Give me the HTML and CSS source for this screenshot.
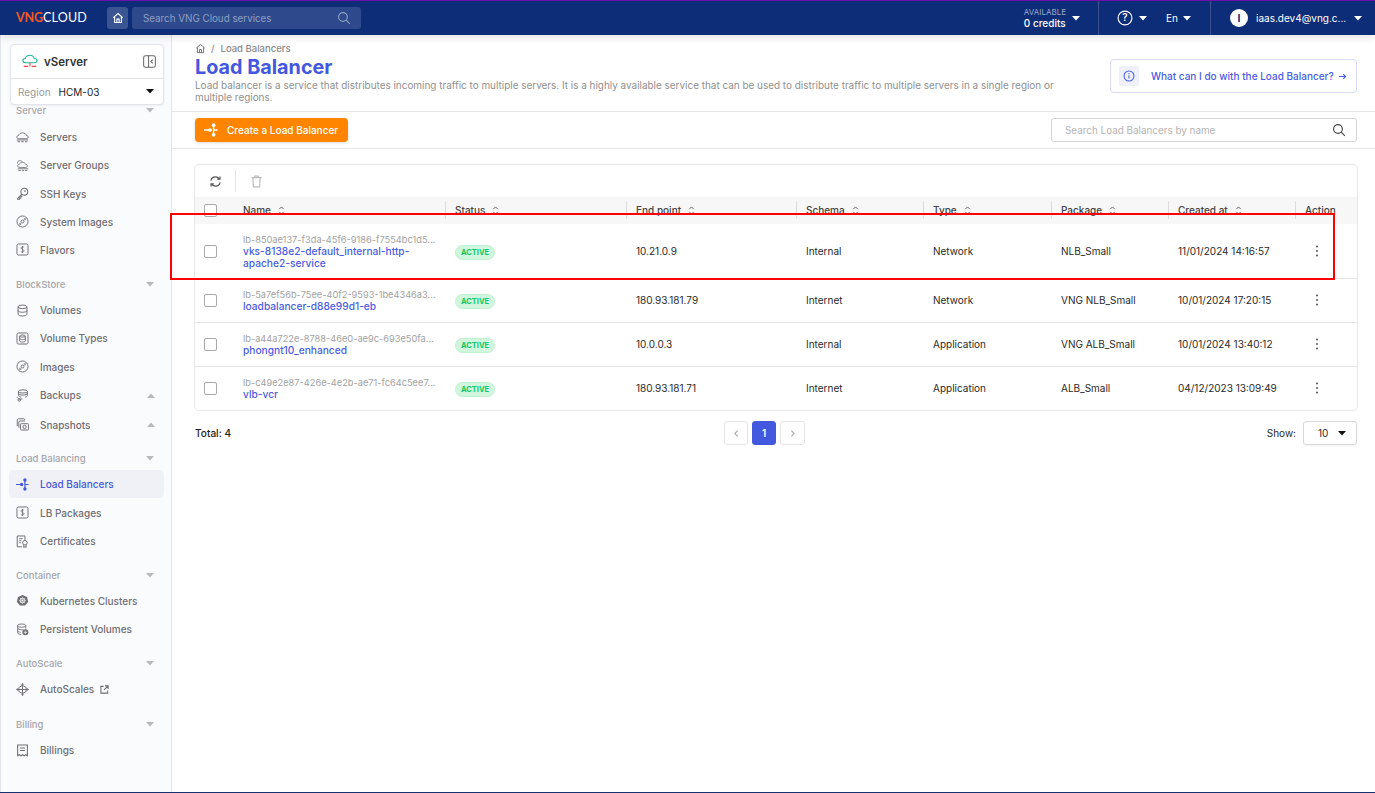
FILE: index.html
```html
<!DOCTYPE html>
<html lang="en">
<head>
<meta charset="utf-8">
<title>Load Balancer</title>
<link rel="stylesheet" href="styles.css">
</head>
<body>
<svg class="defs" width="0" height="0">
  <defs>
    <symbol id="i-lb" viewBox="0 0 16 16"><path d="M0 8h7M11 3v10M11 8h4.500" fill="none" stroke="currentColor" stroke-width="1.500"/><circle cx="7" cy="8" r="2.100" fill="currentColor"/><circle cx="11" cy="2.500" r="2.100" fill="currentColor"/><circle cx="11" cy="13.500" r="2.100" fill="currentColor"/></symbol>
    <symbol id="i-sort" viewBox="0 0 10 12"><path d="M2.500 4.500 5 2l2.500 2.500M2.500 7.500 5 10l2.500-2.500" fill="none" stroke="currentColor" stroke-width="1"/></symbol>
    <symbol id="i-disc" viewBox="0 0 16 16"><g fill="none" stroke="currentColor" stroke-width="1.200"><circle cx="8" cy="8" r="6.800"/><circle cx="8" cy="8" r="1.800"/><path d="M5 9.500 4.500 11.500 6.500 11M11 6.500 11.500 4.500 9.500 5"/></g></symbol>
    <symbol id="i-dollar" viewBox="0 0 16 16"><rect x="1.200" y="1.200" width="13.600" height="13.600" rx="1.800" fill="none" stroke="currentColor" stroke-width="1.200"/><path d="M10 5.500C9.500 4.600 6 4.400 6 6.200S10 7.800 10 9.700 6.500 11.400 6 10.500M8 3.800v8.400" fill="none" stroke="currentColor" stroke-width="1"/></symbol>
    <symbol id="i-caret" viewBox="0 0 10 6"><path d="M0 0h10L5 5.500z" fill="currentColor"/></symbol>
    <symbol id="i-kebab" viewBox="0 0 4 14"><circle cx="2" cy="2.500" r="1" fill="currentColor"/><circle cx="2" cy="7" r="1" fill="currentColor"/><circle cx="2" cy="11.500" r="1" fill="currentColor"/></symbol>
    <symbol id="i-search" viewBox="0 0 16 16"><circle cx="6.800" cy="6.800" r="5" fill="none" stroke="currentColor" stroke-width="1.300"/><path d="m10.500 10.500 4.200 4.200" stroke="currentColor" stroke-width="1.300"/></symbol>
  </defs>
</svg>

<div class="app">
  <header class="topbar">
    <div class="logo"><span class="logo-vng">VNG</span><span class="logo-cloud">CLOUD</span></div>
    <a class="home-btn"><svg class="ico-home" viewBox="0 0 16 16"><path d="M1.800 7.500 8 2l6.200 5.500M3.500 6.500V14h9V6.500M6.500 14V9.500h3V14" fill="none" stroke="currentColor" stroke-width="1.400"/></svg></a>
    <div class="top-search"><span>Search VNG Cloud services</span><svg class="ico-14"><use href="#i-search"/></svg></div>
    <div class="top-right">
      <div class="credits">
        <div class="credits-text"><small>AVAILABLE</small><b>0 credits</b></div>
        <svg class="caret-w"><use href="#i-caret"/></svg>
      </div>
      <div class="help">
        <svg class="ico-help" viewBox="0 0 18 18"><circle cx="9" cy="9" r="7.800" fill="none" stroke="currentColor" stroke-width="1.300"/><text x="9" y="12.800" text-anchor="middle" class="help-q">?</text></svg>
        <svg class="caret-w"><use href="#i-caret"/></svg>
        <span class="lang">En</span>
        <svg class="caret-w"><use href="#i-caret"/></svg>
      </div>
      <div class="account">
        <span class="avatar">I</span>
        <span class="email">iaas.dev4@vng.c...</span>
        <svg class="caret-w"><use href="#i-caret"/></svg>
      </div>
    </div>
  </header>

  <div class="body-row">
    <aside class="sidebar">
      <div class="svc-card">
        <div class="svc-head">
          <svg class="svc-logo" viewBox="0 0 18 16"><path d="M4.500 9.500C2.300 9.500 1 8.300 1 7s1-2.300 2.800-2.300C4.300 2.600 6.300 1 8.800 1c2.600 0 4.500 1.600 5 3.700C15.800 4.700 17 5.700 17 7s-1.300 2.500-3.500 2.500z" fill="none" stroke="#18b89a" stroke-width="1.200"/><path d="M9 9.500v4" stroke="#e5484d" stroke-width="1.200"/><path d="M2 13.500h5M11 13.500h5" stroke="#e5484d" stroke-width="1.200"/></svg>
          <span class="svc-name">vServer</span>
          <svg class="svc-collapse" viewBox="0 0 14 14"><rect x=".7" y=".7" width="12.600" height="12.600" rx="2" fill="none" stroke="currentColor" stroke-width="1.100"/><path d="M6 .7v12.600" stroke="currentColor" stroke-width="1.100"/><path d="M10.500 5 8.500 7l2 2" fill="none" stroke="currentColor" stroke-width="1.100"/></svg>
        </div>
        <div class="svc-region">
          <span class="region-label">Region</span>
          <span class="region-value">HCM-03</span>
          <svg class="caret-k"><use href="#i-caret"/></svg>
        </div>
      </div>

      <nav class="nav">
        <section class="nav-group">
          <div class="nav-label"><span>Server</span><svg class="caret-g"><use href="#i-caret"/></svg></div>
          <a class="nav-item"><svg class="nav-ico" viewBox="0 0 16 16"><g fill="none" stroke="currentColor" stroke-width="1.100"><path d="M3.500 9.500C2 9.500 1 8.700 1 7.500s1-2 2.300-2C3.600 3.500 5.500 2.300 8 2.300s4.400 1.200 4.700 3.200C14 5.500 15 6.300 15 7.500s-1 2-2.500 2z"/><path d="M1 11h14"/></g><path d="M2 13.200h3M6.500 13.200h3M11 13.200h3" stroke="currentColor" stroke-width="1.200"/></svg>Servers</a>
          <a class="nav-item"><svg class="nav-ico" viewBox="0 0 16 16"><g fill="none" stroke="currentColor" stroke-width="1"><path d="M5 10.500C3 10.500 2 9.700 2 8.600s.8-1.900 2-1.900C4.400 5 6 4.200 8 4.200s3.600.9 4 2.500c1.200 0 2 .8 2 1.900s-1 1.900-2.500 1.900z"/><path d="M2 5.500C1.500 3.500 3 1.500 5.500 2c1 .1 2 .7 2.500 1.800"/><path d="M2 12h13"/></g><path d="M3 14h3M7 14h3M11 14h3" stroke="currentColor" stroke-width="1.100"/></svg>Server Groups</a>
          <a class="nav-item"><svg class="nav-ico" viewBox="0 0 16 16"><g fill="none" stroke="currentColor" stroke-width="1.300"><circle cx="10.200" cy="5.800" r="4.200"/><path d="M7.200 8.800 2 14v1h2.500v-1.500H6V12l1.800-1.500"/></g><circle cx="11" cy="5" r="1" fill="currentColor"/></svg>SSH Keys</a>
          <a class="nav-item"><svg class="nav-ico"><use href="#i-disc"/></svg>System Images</a>
          <a class="nav-item"><svg class="nav-ico"><use href="#i-dollar"/></svg>Flavors</a>
        </section>
        <section class="nav-group">
          <div class="nav-label"><span>BlockStore</span><svg class="caret-g"><use href="#i-caret"/></svg></div>
          <a class="nav-item"><svg class="nav-ico" viewBox="0 0 16 16"><g fill="none" stroke="currentColor" stroke-width="1.200"><ellipse cx="8" cy="3.500" rx="5.500" ry="2.200"/><path d="M2.500 3.500v9c0 1.200 2.500 2.200 5.500 2.200s5.500-1 5.500-2.200v-9M2.500 8c0 1.200 2.500 2.200 5.500 2.200s5.500-1 5.500-2.200"/></g></svg>Volumes</a>
          <a class="nav-item"><svg class="nav-ico" viewBox="0 0 16 16"><g fill="none" stroke="currentColor" stroke-width="1.200"><rect x="1.200" y="1.200" width="13.600" height="13.600" rx="2"/><ellipse cx="8" cy="5" rx="3.500" ry="1.300"/><path d="M4.500 5v6c0 .8 1.500 1.300 3.500 1.300s3.500-.5 3.500-1.300V5M4.500 8c0 .8 1.500 1.300 3.500 1.300s3.500-.5 3.500-1.300"/></g></svg>Volume Types</a>
          <a class="nav-item"><svg class="nav-ico"><use href="#i-disc"/></svg>Images</a>
          <a class="nav-item nav-item-exp"><svg class="nav-ico" viewBox="0 0 16 16"><g fill="none" stroke="currentColor" stroke-width="1.200"><ellipse cx="8.500" cy="3" rx="5.500" ry="2"/><path d="M3 3v5c0 .9 1.600 1.600 3.500 1.900M14 3v5c0 1-1.500 1.700-3 2M3 5.500c0 1 2.500 2 5.500 2s5.500-1 5.500-2M1.500 10c0 1 1 2 3 2.300h3.500"/><circle cx="4" cy="13.500" r="1.500"/></g></svg><span class="grow">Backups</span><svg class="caret-g caret-up"><use href="#i-caret"/></svg></a>
          <a class="nav-item nav-item-exp"><svg class="nav-ico" viewBox="0 0 16 16"><g fill="none" stroke="currentColor" stroke-width="1.200"><path d="M1.500 10V2.500C1.500 1.700 2.200 1 3 1h6.500c.8 0 1.500.7 1.500 1.500"/><path d="M3.500 12V5c0-.8.700-1.300 1.500-1.300h6"/><rect x="5.500" y="7" width="10" height="7.800" rx="1"/><circle cx="10.500" cy="11" r="2"/></g></svg><span class="grow">Snapshots</span><svg class="caret-g caret-up"><use href="#i-caret"/></svg></a>
        </section>
        <section class="nav-group nav-group-lb">
          <div class="nav-label"><span>Load Balancing</span><svg class="caret-g"><use href="#i-caret"/></svg></div>
          <a class="nav-item nav-item-active"><svg class="nav-ico"><use href="#i-lb"/></svg>Load Balancers</a>
          <a class="nav-item"><svg class="nav-ico"><use href="#i-dollar"/></svg>LB Packages</a>
          <a class="nav-item"><svg class="nav-ico" viewBox="0 0 16 16"><g fill="none" stroke="currentColor" stroke-width="1.200"><path d="M7.500 14.500H1.500V1.200h9.500v5"/><path d="M4 4.500h4M4 7h2.500M4 9.500h2"/><circle cx="11" cy="9.500" r="2.800"/><path d="M9.500 12.500v2.800l1.500-.8 1.500.8v-2.800"/></g></svg>Certificates</a>
        </section>
        <section class="nav-group nav-group-ct">
          <div class="nav-label"><span>Container</span><svg class="caret-g"><use href="#i-caret"/></svg></div>
          <a class="nav-item"><svg class="nav-ico" viewBox="0 0 16 16"><path d="M8 1.200 13.500 3.800 15 9.500 11.200 14.300H4.800L1 9.500 2.500 3.800z" fill="currentColor"/><circle cx="8" cy="8" r="3" fill="none" stroke="#fafbfd" stroke-width="1"/><path d="M8 4v8M4 8h8M5.200 5.200l5.600 5.600M10.800 5.200l-5.600 5.600" stroke="#fafbfd" stroke-width=".6"/></svg>Kubernetes Clusters</a>
          <a class="nav-item"><svg class="nav-ico" viewBox="0 0 16 16"><g fill="none" stroke="currentColor" stroke-width="1.100"><ellipse cx="7" cy="3.200" rx="5" ry="2"/><path d="M2 3.200v9c0 1 1.800 1.900 4.500 2M12 3.200V7M2 6.200c0 1.100 2.200 2 5 2 .8 0 1.500-.1 2-.2M2 9.500c0 1 1.700 1.800 4 2"/></g><circle cx="11.500" cy="11.500" r="3.700" fill="currentColor"/><path d="M11.500 9.500v4M9.500 11.500h4" stroke="#fafbfd" stroke-width=".9"/></svg>Persistent Volumes</a>
        </section>
        <section class="nav-group">
          <div class="nav-label"><span>AutoScale</span><svg class="caret-g"><use href="#i-caret"/></svg></div>
          <a class="nav-item"><svg class="nav-ico" viewBox="0 0 16 16"><path d="M8 3 12.500 5.500v5L8 13 3.500 10.500v-5z" fill="none" stroke="currentColor" stroke-width="1.200"/><path d="M8 .5v15M.5 8h15" stroke="currentColor" stroke-width="1.200"/><path d="M6.500 2 8 .5 9.500 2M6.500 14 8 15.500 9.500 14M2 6.500.5 8 2 9.500M14 6.500 15.500 8 14 9.500" fill="none" stroke="currentColor" stroke-width="1"/></svg>AutoScales<svg class="ext" viewBox="0 0 10 10"><path d="M4 1.500H1v7.500h7.500V6M5.500 1h3.500v3.500M9 1 4.500 5.500" fill="none" stroke="currentColor" stroke-width="1.200"/></svg></a>
        </section>
        <section class="nav-group nav-group-bill">
          <div class="nav-label"><span>Billing</span><svg class="caret-g"><use href="#i-caret"/></svg></div>
          <a class="nav-item"><svg class="nav-ico" viewBox="0 0 16 16"><g fill="none" stroke="currentColor" stroke-width="1.300"><path d="M2 1.200h12v13.300l-2-1.300-2 1.300-2-1.300-2 1.300-2-1.300-2 1.300z"/><path d="M5 5h6M5 8h6"/></g></svg>Billings</a>
        </section>
      </nav>
    </aside>

    <main class="main">
      <section class="page-head">
        <div class="head-text">
          <div class="crumbs">
            <svg class="crumb-home" viewBox="0 0 16 16"><path d="M1.800 7.500 8 2l6.200 5.500M3.500 6.500V14h9V6.500M6.500 14V9.500h3V14" fill="none" stroke="currentColor" stroke-width="1.300"/></svg>
            <span class="crumb-sep">/</span>
            <span>Load Balancers</span>
          </div>
          <h1>Load Balancer</h1>
          <p>Load balancer is a service that distributes incoming traffic to multiple servers. It is a highly available service that can be used to distribute traffic to multiple servers in a single region or multiple regions.</p>
        </div>
        <a class="info-box">
          <span class="info-tile"><svg viewBox="0 0 14 14"><circle cx="7" cy="7" r="5.800" fill="none" stroke="currentColor" stroke-width="1.200"/><path d="M7 6.300v3.500" stroke="currentColor" stroke-width="1.300"/><circle cx="7" cy="4.300" r=".8" fill="currentColor"/></svg></span>
          <span class="info-text">What can I do with the Load Balancer?</span>
          <svg class="info-arrow" viewBox="0 0 10 10"><path d="M1 5h7.500M5.800 2.300 8.500 5 5.800 7.700" fill="none" stroke="currentColor" stroke-width="1.200"/></svg>
        </a>
      </section>

      <section class="toolbar">
        <button class="btn-create"><svg class="ico-14"><use href="#i-lb"/></svg>Create a Load Balancer</button>
        <div class="table-search"><span>Search Load Balancers by name</span><svg class="ico-14"><use href="#i-search"/></svg></div>
      </section>

      <section class="content">
        <div class="card">
          <div class="card-tools">
            <svg class="tool" viewBox="0 0 14 14"><g fill="none" stroke="currentColor" stroke-width="1.300"><path d="M2 6C2.500 3.500 4.500 2 7 2c1.800 0 3.200.8 4.200 2.200M12 8c-.5 2.500-2.500 4-5 4-1.800 0-3.200-.8-4.200-2.200"/><path d="M11.800 1.500v3h-3M2.200 12.500v-3h3"/></g></svg>
            <span class="tool-sep"></span>
            <svg class="tool tool-off" viewBox="0 0 14 14"><g fill="none" stroke="currentColor" stroke-width="1.300"><path d="M1.500 2.800h11M5 2.800V1.300h4v1.500"/><path d="M3 2.800l.7 9.900h6.600l.7-9.900"/></g></svg>
          </div>
          <table class="grid">
            <colgroup>
              <col class="c-check"><col class="c-name"><col class="c-status"><col class="c-end"><col class="c-schema"><col class="c-type"><col class="c-pack"><col class="c-date"><col class="c-act">
            </colgroup>
            <thead>
              <tr>
                <th class="cell-check"><span class="box"></span></th>
                <th><span class="th-in">Name<svg class="sort"><use href="#i-sort"/></svg></span></th>
                <th><span class="th-in th-sep">Status<svg class="sort"><use href="#i-sort"/></svg></span></th>
                <th><span class="th-in th-sep">End point<svg class="sort"><use href="#i-sort"/></svg></span></th>
                <th><span class="th-in th-sep">Schema<svg class="sort"><use href="#i-sort"/></svg></span></th>
                <th><span class="th-in th-sep">Type<svg class="sort"><use href="#i-sort"/></svg></span></th>
                <th><span class="th-in th-sep">Package<svg class="sort"><use href="#i-sort"/></svg></span></th>
                <th><span class="th-in th-sep">Created at<svg class="sort"><use href="#i-sort"/></svg></span></th>
                <th><span class="th-in th-sep">Action</span></th>
              </tr>
            </thead>
            <tbody>
              <tr class="row-tall">
                <td class="cell-check"><span class="box"></span></td>
                <td class="cell-lb"><div class="lb-id">lb-850ae137-f3da-45f6-9186-f7554bc1d5...</div><a class="lb-name">vks-8138e2-default_internal-http-apache2-service</a></td>
                <td><span class="badge">ACTIVE</span></td>
                <td>10.21.0.9</td><td>Internal</td><td>Network</td><td>NLB_Small</td><td>11/01/2024 14:16:57</td>
                <td><svg class="kebab"><use href="#i-kebab"/></svg></td>
              </tr>
              <tr>
                <td class="cell-check"><span class="box"></span></td>
                <td class="cell-lb"><div class="lb-id">lb-5a7ef56b-75ee-40f2-9593-1be4346a3...</div><a class="lb-name">loadbalancer-d88e99d1-eb</a></td>
                <td><span class="badge">ACTIVE</span></td>
                <td>180.93.181.79</td><td>Internet</td><td>Network</td><td>VNG NLB_Small</td><td>10/01/2024 17:20:15</td>
                <td><svg class="kebab"><use href="#i-kebab"/></svg></td>
              </tr>
              <tr>
                <td class="cell-check"><span class="box"></span></td>
                <td class="cell-lb"><div class="lb-id">lb-a44a722e-8788-46e0-ae9c-693e50fa...</div><a class="lb-name">phongnt10_enhanced</a></td>
                <td><span class="badge">ACTIVE</span></td>
                <td>10.0.0.3</td><td>Internal</td><td>Application</td><td>VNG ALB_Small</td><td>10/01/2024 13:40:12</td>
                <td><svg class="kebab"><use href="#i-kebab"/></svg></td>
              </tr>
              <tr>
                <td class="cell-check"><span class="box"></span></td>
                <td class="cell-lb"><div class="lb-id">lb-c49e2e87-426e-4e2b-ae71-fc64c5ee7...</div><a class="lb-name">vlb-vcr</a></td>
                <td><span class="badge">ACTIVE</span></td>
                <td>180.93.181.71</td><td>Internet</td><td>Application</td><td>ALB_Small</td><td>04/12/2023 13:09:49</td>
                <td><svg class="kebab"><use href="#i-kebab"/></svg></td>
              </tr>
            </tbody>
          </table>
        </div>

        <div class="foot">
          <div class="total">Total: 4</div>
          <div class="pager">
            <span class="pg"><svg viewBox="0 0 8 8"><path d="M5 1.500 2.500 4 5 6.500" fill="none" stroke="currentColor"/></svg></span>
            <span class="pg pg-on">1</span>
            <span class="pg pg-next"><svg viewBox="0 0 8 8"><path d="M3 1.500 5.500 4 3 6.500" fill="none" stroke="currentColor"/></svg></span>
          </div>
          <div class="show"><span>Show:</span><div class="show-sel"><span>10</span><svg class="caret-k"><use href="#i-caret"/></svg></div></div>
        </div>
      </section>

      <div class="highlight"></div>
    </main>
  </div>
</div>
</body>
</html>
```
FILE: styles.css
```css
* { box-sizing: border-box; }
html, body { margin: 0; padding: 0; height: 100%; }
body { font-family: Inter, "Liberation Sans", sans-serif; font-size: 10px; color: #2a2a2a; background: #fff; overflow: hidden; }
.defs { position: absolute; }
a { text-decoration: none; color: inherit; }

.app { height: 793px; display: flex; flex-direction: column; border-bottom: 1px solid #16316f; overflow: hidden; }

/* top bar */
.topbar { height: 35px; flex: none; background: #0e2d78; border-top: 1px solid #6d0fa8; display: flex; align-items: center; color: #fff; padding-left: 16px; box-shadow: 0 2px 8px rgba(0,0,0,.12); position: relative; z-index: 3; }
.logo { width: 91px; display: flex; align-items: center; font-family: Lato, sans-serif; font-size: 12.5px; line-height: 1; }
.logo-vng { color: #f0591f; font-weight: 700; width: 27px; letter-spacing: -.2px; }
.logo-cloud { color: #fff; font-weight: 400; letter-spacing: .2px; }
.home-btn { width: 21px; height: 22px; border-radius: 3px; background: #3a5592; display: flex; align-items: center; justify-content: center; color: #fff; margin-right: 4px; }
.ico-home { width: 12px; height: 12px; }
.top-search { width: 229px; height: 22px; border-radius: 3px; background: #2f4a8c; display: flex; align-items: center; justify-content: space-between; padding: 0 10px 0 11px; color: #8d9fc4; font-size: 9.8px; }
.ico-14 { width: 14px; height: 14px; flex: none; }
.top-right { margin-left: auto; display: flex; align-items: stretch; height: 100%; }
.credits { display: flex; align-items: center; gap: 6px; padding-right: 18px; border-right: 1px solid #3a5292; }
.credits-text { display: flex; flex-direction: column; }
.credits-text small { font-size: 8px; color: #9aa9c9; line-height: 10px; }
.credits-text b { font-size: 10px; font-weight: 500; line-height: 12px; }
.caret-w { width: 8px; height: 5px; color: #fff; flex: none; }
.caret-k { width: 8px; height: 5px; color: #111; flex: none; }
.caret-g { width: 8px; height: 5px; color: #b8b8bd; flex: none; }
.caret-up { transform: rotate(180deg); }
.help { display: flex; align-items: center; padding: 0 19px 0 18px; border-right: 1px solid #3a5292; }
.ico-help { width: 16px; height: 16px; margin-right: 6px; }
.help-q { font-size: 11px; font-weight: 600; fill: currentColor; }
.lang { margin-left: 19px; margin-right: 6px; width: 11px; font-size: 10px; }
.account { display: flex; align-items: center; padding: 0 13px 0 19px; }
.avatar { width: 18px; height: 18px; border-radius: 50%; background: #fff; color: #0e2d78; font-weight: 700; font-size: 10.5px; display: flex; align-items: center; justify-content: center; margin-right: 8px; }
.email { font-size: 10px; width: 98px; }

.body-row { flex: 1; display: flex; min-height: 0; }

/* sidebar */
.sidebar { width: 172px; flex: none; background: #fafbfd; border-right: 1px solid #e3e4ef; border-left: 1px solid #e3e4ef; position: relative; }
.svc-card { position: absolute; left: 9px; top: 9px; width: 154px; height: 61px; background: #fff; border: 1px solid #e2e4ea; border-radius: 4px; box-shadow: 0 1px 3px rgba(0,0,0,.06); z-index: 2; }
.svc-head { height: 34px; display: flex; align-items: center; padding: 0 7px 0 11px; border-bottom: 1px solid #e2e4ea; }
.svc-logo { width: 16px; height: 15px; margin-right: 6px; }
.svc-name { font-size: 11.5px; font-weight: 600; color: #333; flex: 1; }
.svc-collapse { width: 13px; height: 13px; color: #666; }
.svc-region { height: 25px; display: flex; align-items: center; padding: 0 9px 0 7px; font-size: 10px; }
.region-label { color: #9a9a9a; margin-right: 8px; }
.region-value { flex: 1; color: #222; }

.nav { padding-top: 62.6px; }
.nav-group { margin-top: 7.5px; }
.nav-group:first-child { margin-top: 0; }
.nav-group-lb { margin-top: 5.8px; }
.nav-group-ct { margin-top: 7px; }
.nav-group-bill { margin-top: 8.2px; }
.nav-label { height: 25.5px; margin-bottom: -1px; display: flex; align-items: center; justify-content: space-between; padding: 0 17px 0 15px; color: #a6a6ab; font-size: 9.500px; font-weight: 500; }
.nav-group:first-child .nav-label { margin-bottom: 0; }
.nav-item { height: 28.2px; display: flex; align-items: center; margin: 0 7px 0 8px; padding: 0 9px 0 7px; color: #6e6e73; font-size: 10px; font-weight: 500; border-radius: 5px; }
.nav-group-lb .nav-item { height: 28.5px; }
.nav-item-exp { height: 29.5px; }
.nav-item-active { background: #f0f1f7; color: #4558d9; }
.nav-ico { width: 13px; height: 13px; margin-right: 11px; flex: none; }
.grow { flex: 1; }
.ext { width: 9px; height: 9px; margin-left: 6px; }

/* main */
.main { flex: 1; min-width: 0; position: relative; display: flex; flex-direction: column; }
.page-head { height: 77px; flex: none; display: flex; align-items: flex-start; padding: 6px 18px 0 23px; border-bottom: 1px solid #e6e6e6; }
.head-text { flex: 1; min-width: 0; max-width: 880px; }
.crumbs { display: flex; align-items: center; height: 14px; color: #8a8a8a; font-size: 9.500px; font-weight: 500; }
.crumb-home { width: 11px; height: 11px; color: #666; margin-right: 5px; }
.crumb-sep { margin-right: 6px; }
h1 { margin: 0; font-size: 19.8px; line-height: 24px; font-weight: 700; color: #4357df; }
.page-head p { margin: 0; font-size: 9.94px; line-height: 12px; color: #8f8f8f; }
.info-box { margin-left: auto; margin-top: 18px; width: 247px; height: 34px; border: 1px solid #d6dbf7; border-radius: 4px; display: flex; align-items: center; padding: 0 9px 0 8px; color: #4a5de0; flex: none; }
.info-tile { width: 20px; height: 20px; flex: none; background: #eef0fb; border-radius: 2px; display: flex; align-items: center; justify-content: center; margin-right: 12px; }
.info-tile svg { width: 12px; height: 12px; }
.info-text { font-size: 10px; font-weight: 500; white-space: nowrap; flex: 1; }
.info-arrow { width: 9px; height: 9px; flex: none; }

.toolbar { height: 37px; flex: none; display: flex; align-items: center; justify-content: space-between; padding: 0 18px 0 23px; border-bottom: 1px solid #e6e6e6; }
.btn-create { width: 153px; height: 24px; border: 0; border-radius: 4px; background: #ff8500; color: #fff; font: 500 10px Inter, sans-serif; display: flex; align-items: center; padding: 0 0 0 9px; gap: 9px; box-shadow: 0 1px 3px rgba(0,0,0,.15); }
.table-search { width: 306px; height: 24px; border: 1px solid #d5d5d5; border-radius: 3px; display: flex; align-items: center; justify-content: space-between; padding: 0 10px 0 13px; color: #b5b5b5; font-size: 9.9px; }
.table-search svg { color: #444; }

.content { padding: 15px 17px 0 22px; }
.card { border: 1px solid #e7e7e7; border-radius: 5px; overflow: hidden; }
.card-tools { height: 32px; display: flex; align-items: center; padding-left: 14px; }
.tool { width: 13px; height: 13px; color: #555; }
.tool-off { color: #bdbdbd; }
.tool-sep { width: 1px; height: 22px; background: #e6e6e6; margin: 0 14px 0 13px; }

.grid { width: 100%; border-collapse: collapse; table-layout: fixed; }
.c-check { width: 38px; } .c-name { width: 212px; } .c-status { width: 181px; } .c-end { width: 170px; } .c-schema { width: 127px; } .c-type { width: 128px; } .c-pack { width: 117px; } .c-date { width: 127px; } .c-act { width: 62px; }
.grid th { background: #f7f7f7; height: 27px; padding: 0; font-size: 10px; font-weight: 500; color: #444; text-align: left; }
.th-in { display: flex; align-items: center; height: 18px; margin-top: -1px; padding-left: 10px; }
.th-sep { border-left: 1px solid #dcdcdc; padding-left: 9px; }
.sort { width: 9px; height: 11px; margin-left: 6px; color: #555; }
.grid .cell-check { padding: 0 0 0 9px; text-align: left; }
.box { display: block; width: 13px; height: 13px; border: 1px solid #a9a9a9; border-radius: 2px; background: #fff; }
.grid td { height: 44px; padding: 0 0 0 10px; border-top: 1px solid #e6e6e6; color: #2a2a2a; font-size: 10px; vertical-align: middle; }
.grid .row-tall td { border-top: 0; height: 54px; padding-top: 1px; }
.lb-id { color: #a2a2a2; font-size: 9.25px; line-height: 12px; white-space: nowrap; }
.lb-name { display: block; margin-top: -1px; color: #4a5de0; font-weight: 500; font-size: 10.2px; line-height: 12px; max-width: 185px; }
.badge { display: block; width: 40px; height: 15px; margin-top: 2px; border-radius: 8px; background: #d0f7dd; border: 1px solid #c0f0d0; color: #14c95f; font-size: 7.5px; font-weight: 700; line-height: 13px; text-align: center; }
.kebab { width: 4px; height: 14px; color: #555; margin-left: 10px; display: block; }

.foot { display: grid; grid-template-columns: 529px auto 1fr; align-items: center; margin-top: 10px; padding: 0 1px; height: 24px; }
.total { font-size: 10.1px; color: #222; font-weight: 500; }
.pager { display: flex; gap: 4px; }
.pg { width: 24px; height: 24px; border: 1px solid #e6e6e6; border-radius: 3px; display: flex; align-items: center; justify-content: center; color: #aaa; }
.pg-next { width: 25px; }
.pg svg { width: 9px; height: 9px; }
.pg-on { background: #4158df; border-color: #4158df; color: #fff; font-weight: 600; font-size: 10px; }
.show { display: flex; align-items: center; justify-content: flex-end; gap: 7px; font-size: 10px; }
.show-sel { width: 54px; height: 24px; border: 1px solid #d8d8d8; border-radius: 3px; display: flex; align-items: center; justify-content: space-between; padding: 0 10px 0 14px; box-shadow: 0 1px 2px rgba(0,0,0,.06); }

/* red annotation drawn over the first row */
.highlight { position: absolute; left: -2px; top: 178px; width: 1165px; height: 67px; border: 2px solid #f00; pointer-events: none; }
```
